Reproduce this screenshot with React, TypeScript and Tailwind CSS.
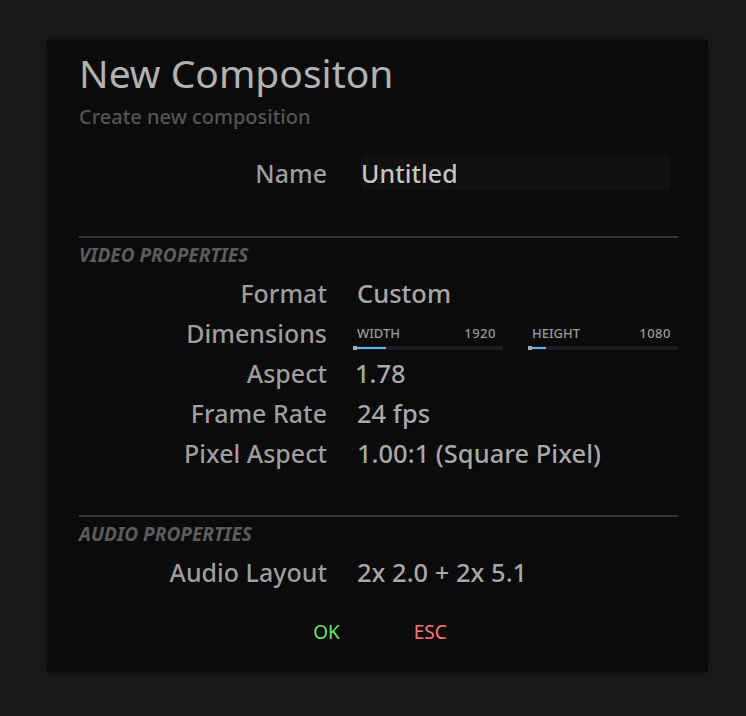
const labelCls =
  "w-[248px] shrink-0 text-right text-[25px] font-medium leading-[40px] text-[#9e9e9e] [text-shadow:1px_1px_1px_#000]";
const valueCls =
  "text-[25.5px] font-medium leading-[40px] text-[#a8a8a8] [text-shadow:1px_1px_1px_#000]";

function Row({ label, children }: { label: string; children: React.ReactNode }) {
  return (
    <div className="flex h-[40px] items-start">
      <div className={labelCls}>{label}</div>
      <div className="ml-[30px] flex-1">{children}</div>
    </div>
  );
}

function DimSlider({ label, value, fill }: { label: string; value: number; fill: number }) {
  return (
    <div className="flex w-[150px] flex-col">
      <div className="flex justify-between pl-[4px] pr-[7px] text-[13px] font-medium leading-[16px] text-[#9a9a9a]">
        <span>{label}</span>
        <span className="tracking-[0.5px]">{value}</span>
      </div>
      <div className="mt-[5px] flex h-[4px] items-center bg-[#1c1c1c]">
        <div className="h-[4px] w-[4px] bg-[#a8a8a8]" />
        <div className="h-[2px] bg-[#5cb6ea]" style={{ width: fill }} />
      </div>
    </div>
  );
}

function Section({ title }: { title: string }) {
  return (
    <>
      <div className="h-[2px] bg-[#333333]" />
      <div className="mt-[5px] text-[19px] font-bold italic leading-[24px] text-[#5c5c5c]">{title}</div>
    </>
  );
}

export default function App() {
  return (
    <div
      className="min-h-[716px] bg-[#1a1a1a] pt-[40px]"
      style={{ fontFamily: '"Noto Sans", "Open Sans", sans-serif' }}
    >
      <div className="ml-[47px] w-[661px] bg-[#0b0b0b] pb-[28px] pl-[32px] pr-[30px] pt-[9px] shadow-[0_0_6px_rgba(0,0,0,0.5)]">
        <h1 className="text-[39px] leading-[48px] text-[#b2b2b2]">New Compositon</h1>
        <p className="mt-[8px] text-[20px] font-medium leading-[24px] text-[#555555]">Create new composition</p>

        <div className="mt-[26px] flex h-[36px] items-start">
          <div className="w-[248px] shrink-0 text-right text-[25px] font-medium leading-[36px] text-[#9e9e9e] [text-shadow:1px_1px_1px_#000]">
            Name
          </div>
          <div className="ml-[34px] h-[35px] w-[309px] rounded-sm bg-[#111111] text-[25px] font-medium leading-[37px] text-[#c4c4c4] [text-shadow:1px_1px_1px_#000]">
            Untitled
          </div>
        </div>

        <div className="mt-[45px]">
          <Section title="VIDEO PROPERTIES" />
        </div>

        <div className="mt-[6px] flex flex-col">
          <Row label="Format">
            <span className={valueCls}>Custom</span>
          </Row>
          <Row label="Dimensions">
            <div className="-ml-[4px] flex gap-[25px] pt-[12px]">
              <DimSlider label="WIDTH" value={1920} fill={29} />
              <DimSlider label="HEIGHT" value={1080} fill={14} />
            </div>
          </Row>
          <Row label="Aspect">
            <span className={`${valueCls} -ml-[2px]`}>1.78</span>
          </Row>
          <Row label="Frame Rate">
            <span className={valueCls}>24 fps</span>
          </Row>
          <Row label="Pixel Aspect">
            <span className={valueCls}>1.00:1 (Square Pixel)</span>
          </Row>
        </div>

        <div className="mt-[42px]">
          <Section title="AUDIO PROPERTIES" />
        </div>

        <div className="mt-[6px]">
          <Row label="Audio Layout">
            <span className={valueCls}>2x 2.0 + 2x 5.1</span>
          </Row>
        </div>

        <div className="ml-[3px] mt-[28px] flex justify-center gap-[74px] text-[19px] leading-[24px]">
          <button className="text-[#6ee36e]">OK</button>
          <button className="text-[#ff7878]">ESC</button>
        </div>
      </div>
    </div>
  );
}
